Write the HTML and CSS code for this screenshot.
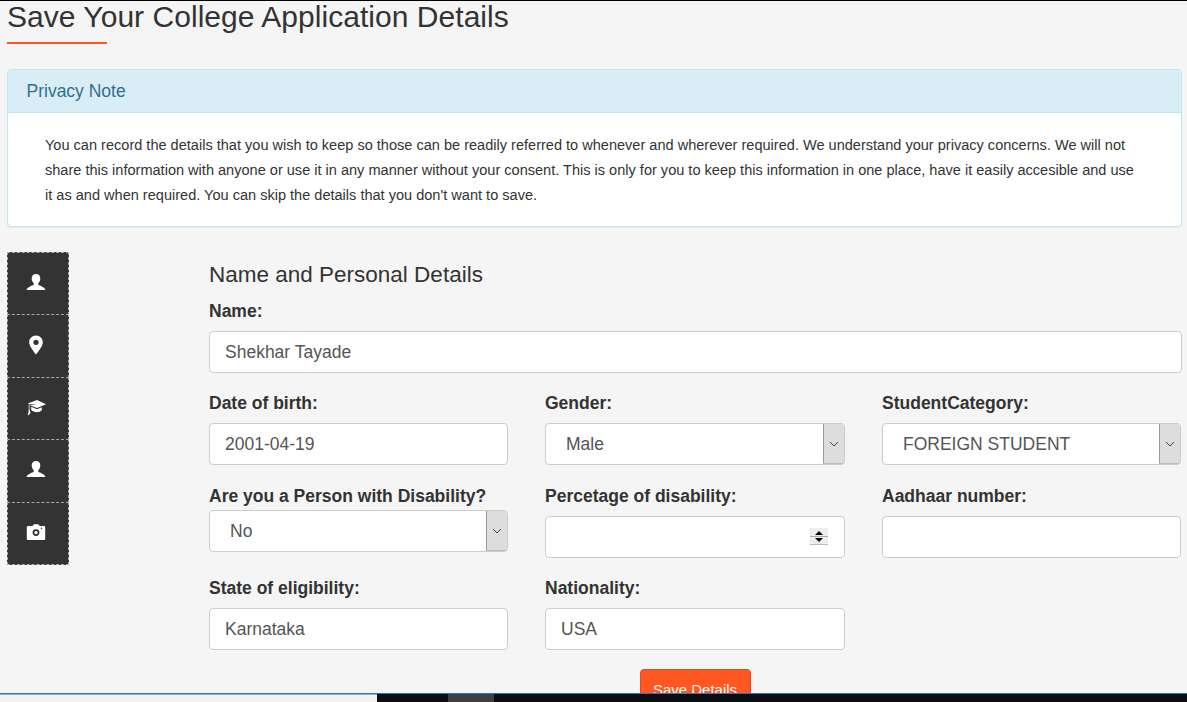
FILE: index.html
```html
<!DOCTYPE html>
<html lang="en">
<head>
<meta charset="utf-8">
<title>Save Your College Application Details</title>
<link rel="stylesheet" href="styles.css">
</head>
<body>
<div class="page">
  <h1 class="title">Save Your College Application Details</h1>
  <div class="rule"></div>
  <section class="panel">
    <div class="panel-head">Privacy Note</div>
    <p class="panel-body">You can record the details that you wish to keep so those can be readily referred to whenever and wherever required. We understand your privacy concerns. We will not share this information with anyone or use it in any manner without your consent. This is only for you to keep this information in one place, have it easily accesible and use it as and when required. You can skip the details that you don't want to save.</p>
  </section>
  <div class="main">
    <nav class="side">
      <a class="side-item"><svg class="ico" viewBox="0 0 20 20"><path d="M10 1c-2.900 0-4.300 2-4.300 4.500 0 2 .9 3.700 2 4.700v1.500c-1.500 1-6.400 2.300-7.200 5.300h19c-.8-3-5.700-4.300-7.200-5.300v-1.500c1.100-1 2-2.700 2-4.700C14.300 3 12.900 1 10 1z"/></svg></a>
      <a class="side-item"><svg class="ico" viewBox="0 0 20 20"><path fill-rule="evenodd" d="M10 0.500c-3.900 0-6.800 3-6.800 6.700 0 3.900 4.200 8.700 6.800 12.300 2.600-3.600 6.800-8.400 6.800-12.300 0-3.700-2.900-6.700-6.800-6.700zm0 4.200a2.600 2.600 0 1 1 0 5.200 2.600 2.600 0 0 1 0-5.200z"/></svg></a>
      <a class="side-item"><svg class="ico" viewBox="0 0 20 20"><path d="M11 3 20 7.300 11 11 4 8.300 10.500 7 3.400 7.200 1.800 6.600z"/><path d="M5.200 9.800 11 12.300l4.800-2v2.900c-1.200 1.300-3 2-5 2s-4-.8-5.600-2.200z"/><path d="M2.700 7.700h.8v4.500l1 3.800-1 1-.6 1-1.200.2.600-2.200.5-3.800z"/></svg></a>
      <a class="side-item"><svg class="ico" viewBox="0 0 20 20"><path d="M10 1c-2.900 0-4.300 2-4.300 4.500 0 2 .9 3.700 2 4.700v1.500c-1.500 1-6.400 2.300-7.200 5.300h19c-.8-3-5.700-4.300-7.200-5.300v-1.500c1.100-1 2-2.700 2-4.700C14.300 3 12.900 1 10 1z"/></svg></a>
      <a class="side-item"><svg class="ico" viewBox="0 0 20 20"><path fill-rule="evenodd" d="M6.500 4 8 2.200h4L14 4h4a1.200 1.200 0 0 1 1.200 1.200V17a1 1 0 0 1-1 1H1.800a1 1 0 0 1-1-1V5.200A1.200 1.200 0 0 1 2 4zM10 7.200a3.400 3.400 0 1 0 0 6.800 3.400 3.400 0 0 0 0-6.800zm0 1.700a1.700 1.700 0 1 1 0 3.400 1.700 1.700 0 0 1 0-3.400zM15.500 5.500a.8.8 0 1 0 0 1.600.8.8 0 0 0 0-1.600z"/></svg></a>
    </nav>
    <form class="form">
      <h3 class="form-title">Name and Personal Details</h3>
      <div class="field">
        <label class="label" for="name">Name:</label>
        <input class="control" id="name" type="text" value="Shekhar Tayade">
      </div>
      <div class="row">
        <div class="cell">
          <label class="label" for="dob">Date of birth:</label>
          <input class="control" id="dob" type="text" value="2001-04-19">
        </div>
        <div class="cell">
          <label class="label" for="gender">Gender:</label>
          <div class="select-wrap">
            <select class="control select" id="gender"><option>Male</option></select>
            <span class="select-btn"><svg viewBox="0 0 10 6"><path d="M1 1l4 4 4-4" fill="none" stroke="#444" stroke-width="1"/></svg></span>
          </div>
        </div>
        <div class="cell">
          <label class="label" for="cat">StudentCategory:</label>
          <div class="select-wrap">
            <select class="control select" id="cat"><option>FOREIGN STUDENT</option></select>
            <span class="select-btn"><svg viewBox="0 0 10 6"><path d="M1 1l4 4 4-4" fill="none" stroke="#444" stroke-width="1"/></svg></span>
          </div>
        </div>
      </div>
      <div class="row row-b">
        <div class="cell">
          <label class="label tight" for="pwd">Are you a Person with Disability?</label>
          <div class="select-wrap">
            <select class="control select" id="pwd"><option>No</option></select>
            <span class="select-btn"><svg viewBox="0 0 10 6"><path d="M1 1l4 4 4-4" fill="none" stroke="#444" stroke-width="1"/></svg></span>
          </div>
        </div>
        <div class="cell">
          <label class="label" for="pct">Percetage of disability:</label>
          <div class="select-wrap">
            <input class="control" id="pct" type="text">
            <span class="spinner"><i class="up"></i><i class="down"></i></span>
          </div>
        </div>
        <div class="cell">
          <label class="label" for="aadhaar">Aadhaar number:</label>
          <input class="control" id="aadhaar" type="text">
        </div>
      </div>
      <div class="row">
        <div class="cell">
          <label class="label" for="state">State of eligibility:</label>
          <input class="control" id="state" type="text" value="Karnataka">
        </div>
        <div class="cell">
          <label class="label" for="nat">Nationality:</label>
          <input class="control" id="nat" type="text" value="USA">
        </div>
      </div>
      <div class="actions"><button class="btn" type="button">Save Details</button></div>
    </form>
  </div>
</div>
<div class="bar"><span class="bar-light"></span><span class="bar-dark"></span><span class="bar-tab"></span><span class="bar-fill"></span></div>
</body>
</html>
```
FILE: styles.css
```css
* { box-sizing: border-box; }
html, body { margin: 0; height: 702px; overflow: hidden; }
body {
  background: #f5f5f5;
  color: #333;
  font-family: "Liberation Sans", Arial, sans-serif;
  font-size: 14px;
  border-top: 1px solid #000;
  position: relative;
}
.page { padding: 0 5px 0 7px; }
.title {
  margin: 0;
  font-size: 30px;
  font-weight: 400;
  line-height: 32px;
  letter-spacing: .04px;
  color: #333;
}
.rule { width: 100px; height: 2px; background: #ff5722; margin-top: 9px; }
.panel {
  margin-top: 25px;
  background: #fff;
  border: 1px solid #bce8f1;
  border-radius: 4px;
  box-shadow: 0 1px 1px rgba(0,0,0,.05);
  height: 158px;
}
.panel-head {
  height: 43px;
  padding: 10px 18.500px;
  background: #d9edf7;
  border-bottom: 1px solid #bce8f1;
  border-radius: 3px 3px 0 0;
  color: #31708f;
  font-size: 17.500px;
  line-height: 22px;
}
.panel-body {
  margin: 0;
  padding: 20px 37px 0;
  line-height: 25px;
  font-size: 14.560px;
  color: #333;
}
.main { display: flex; margin-top: 25px; }
.side { width: 62px; flex: none; align-self: flex-start; }
.side-item {
  display: flex;
  align-items: center;
  justify-content: center;
  height: 63.400px;
  margin-top: -1px;
  background: #333;
  border: 1px dashed #aaa;
}
.side-item:first-child { margin-top: 0; }
.ico { width: 20px; height: 20px; fill: #fff; margin: 0 5px 2px 0; }
.form { margin-left: 140px; flex: 1; min-width: 0; }
.form-title {
  margin: 10px 0 0;
  font-size: 22.500px;
  font-weight: 400;
  line-height: 26px;
}
.field { margin-top: 12px; }
.label {
  display: block;
  height: 22px;
  margin: 0 0 9px;
  font-size: 17.500px;
  font-weight: 700;
  line-height: 22px;
  color: #333;
}
.label.tight { margin-bottom: 3px; }
.control {
  display: block;
  width: 100%;
  height: 42px;
  padding: 0 15px;
  background: #fff;
  border: 1px solid #ccc;
  border-radius: 4px;
  color: #555;
  font-family: inherit;
  font-size: 17.500px;
  outline: 0;
}
.row { display: grid; grid-template-columns: 299px 300px 299px; column-gap: 37px; margin-top: 19px; }
.row-b { margin-top: 20px; }
.select-wrap { position: relative; }
.select { appearance: none; -webkit-appearance: none; padding-left: 20px; }
.select-btn {
  position: absolute;
  top: 1px; right: 1px; bottom: 1px;
  width: 21px;
  display: flex;
  align-items: center;
  justify-content: center;
  background: #ddd;
  border-left: 1px solid #999;
  border-bottom: 1px solid #bbb;
  border-radius: 0 3px 3px 0;
}
.select-btn svg { width: 10px; height: 6px; }
.spinner {
  position: absolute;
  top: 12px; right: 17px;
  width: 18px; height: 17px;
  background: #eee;
  border-bottom: 1px solid #bbb;
  display: flex;
  flex-direction: column;
  align-items: center;
  justify-content: space-between;
  padding: 3px 0 2px;
}
.spinner::after {
  content: "";
  position: absolute;
  left: 0; right: 0; top: 8px;
  height: 1px;
  background: #aaa;
}
.spinner i { width: 0; height: 0; border-left: 4.500px solid transparent; border-right: 4.500px solid transparent; }
.spinner .up { border-bottom: 4px solid #000; }
.spinner .down { border-top: 4px solid #000; }
.actions { text-align: center; margin-top: 19px; margin-left: -1px; }
.btn {
  height: 40px;
  width: 111px;
  padding: 0;
  background: #ff5722;
  border: 1px solid #e64a19;
  border-radius: 4px;
  color: #fff;
  font-family: inherit;
  font-size: 15px;
}
.bar {
  position: absolute;
  left: 0; right: 0; bottom: 0;
  height: 9px;
  display: flex;
  border-top: 1px solid #2f78c0;
}
.bar-light { width: 377px; background: #f2f2f2; border-top: 1px solid #aaa; }
.bar-dark { width: 71px; background: #0a0d14; }
.bar-tab { width: 46px; background: #3c3f44; }
.bar-fill { flex: 1; background: #0a0d14; }
```
